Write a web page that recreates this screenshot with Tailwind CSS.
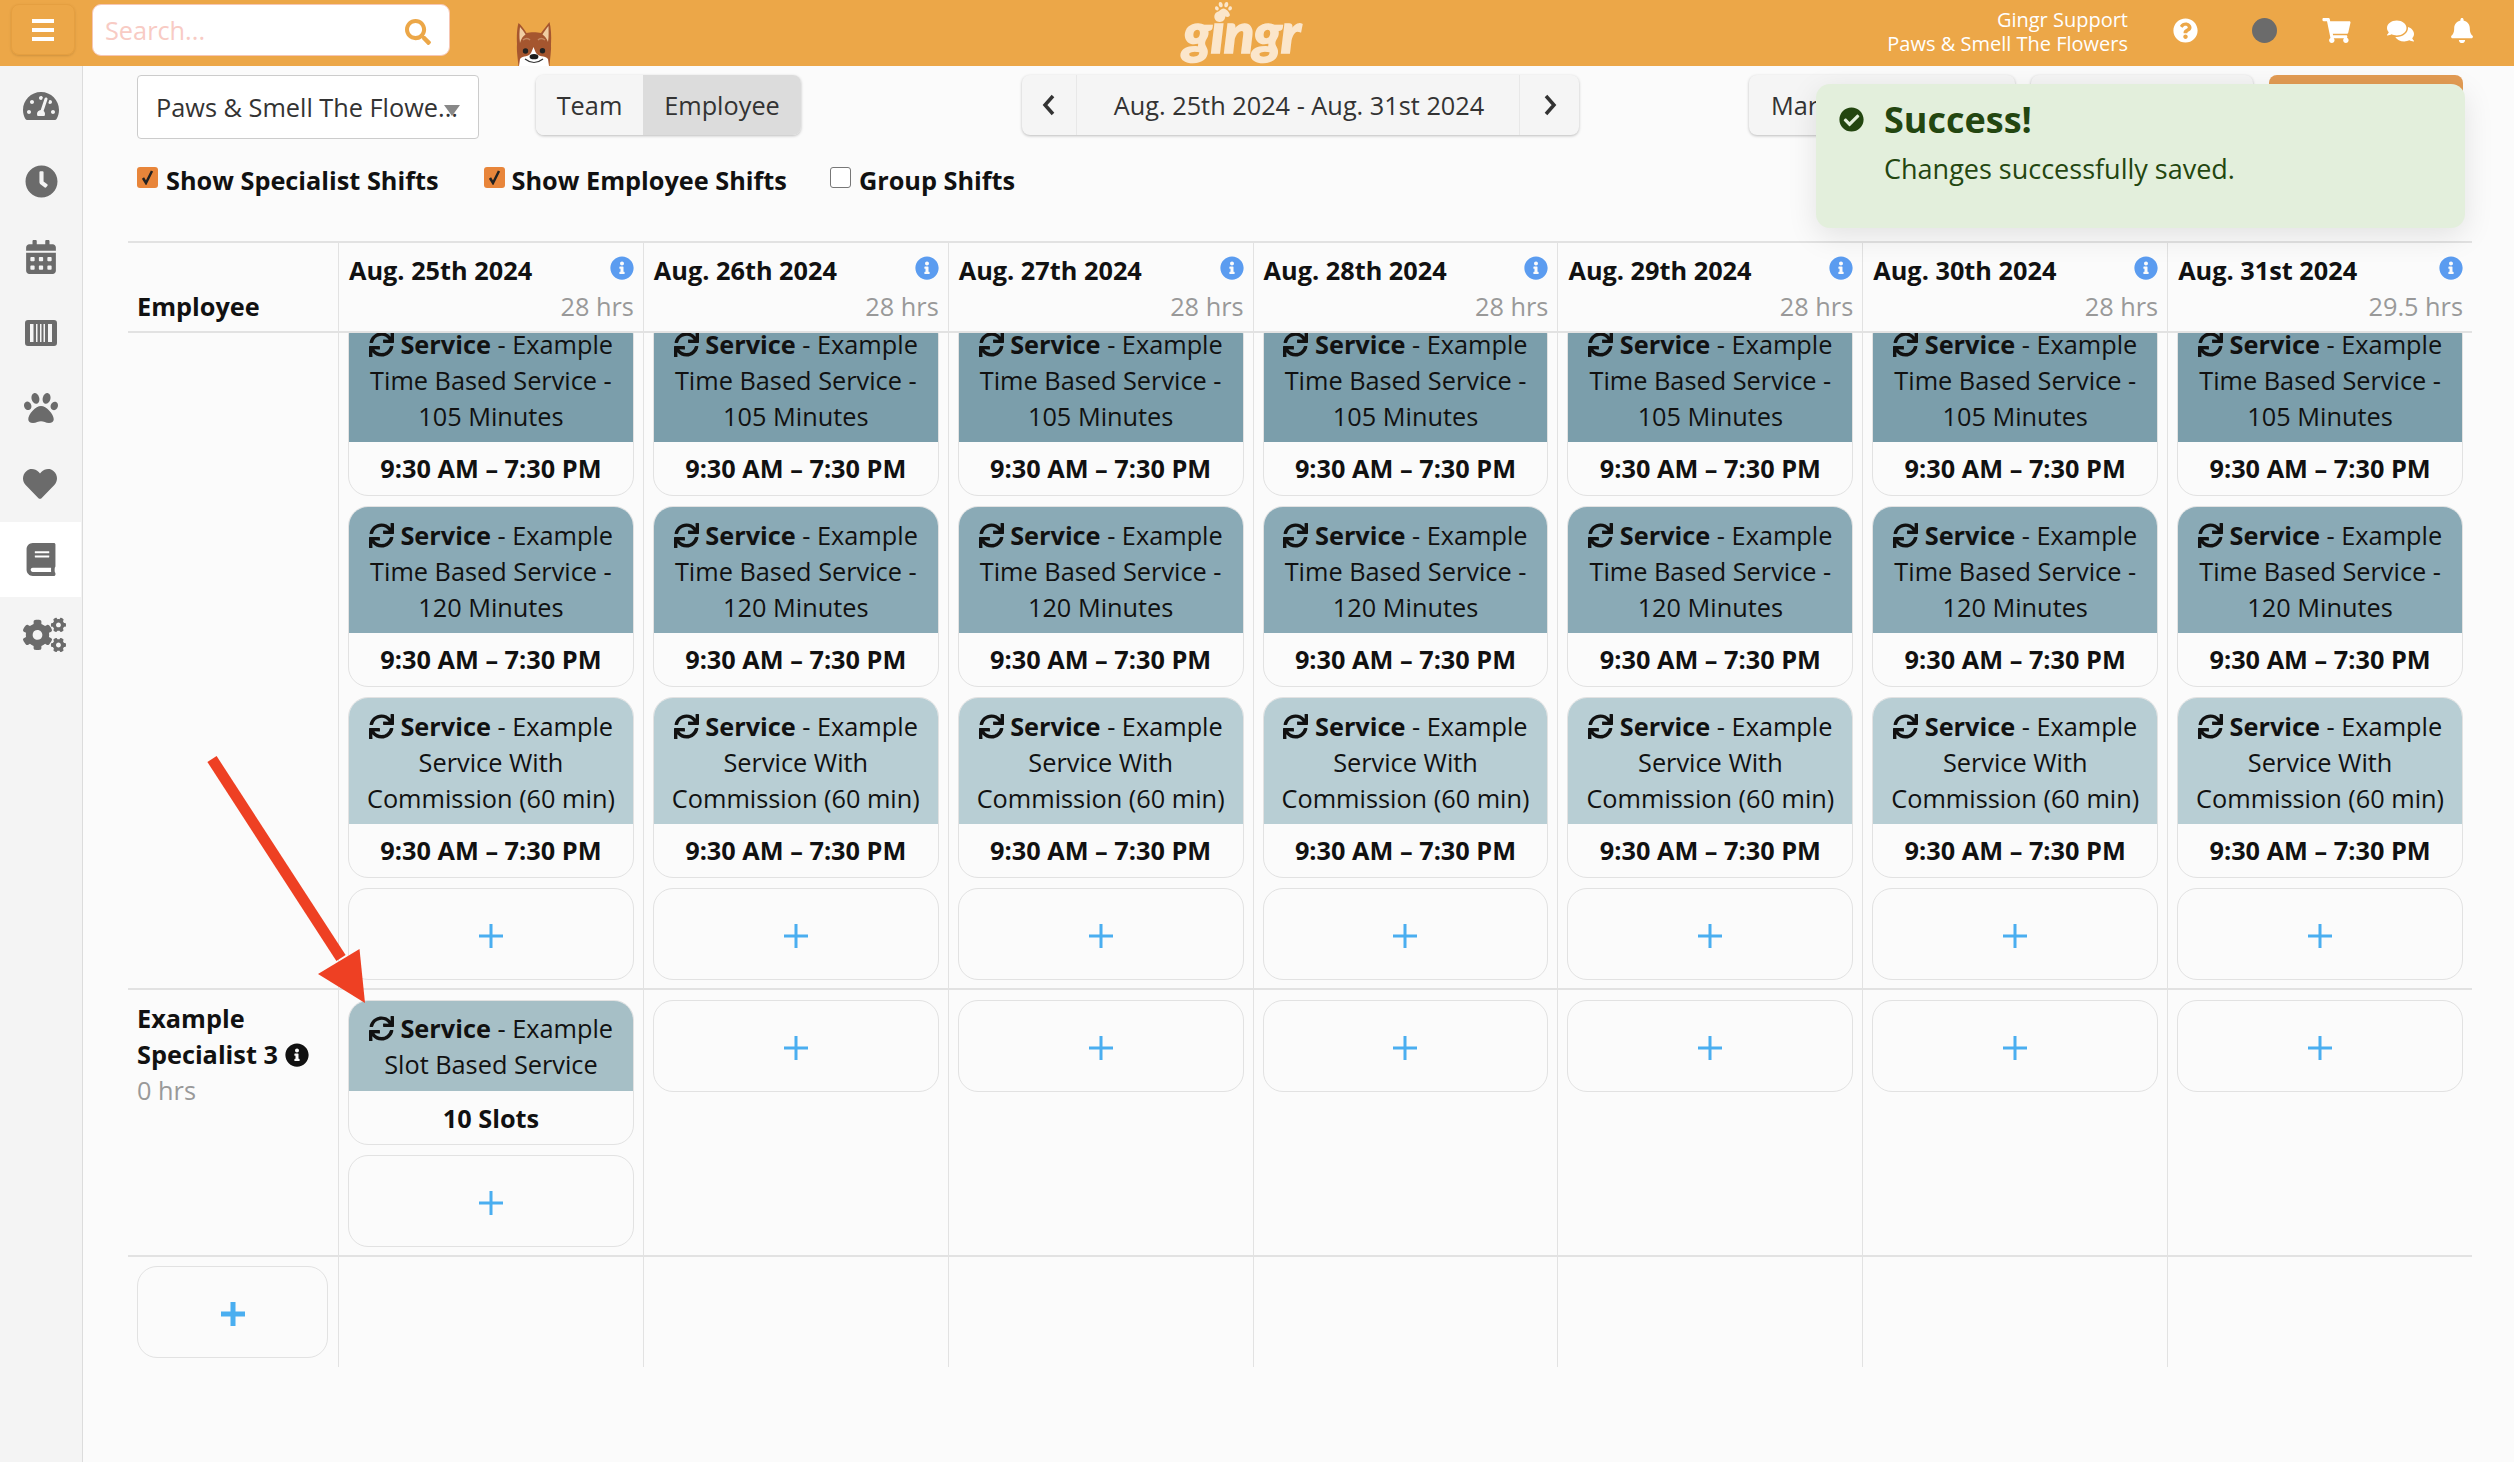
<!DOCTYPE html>
<html lang="en"><head><meta charset="utf-8"><title>Gingr</title>
<script src="https://cdn.jsdelivr.net/npm/@tailwindcss/browser@4"></script></head>
<body class="bg-[#fbfbfb] text-[#111] font-['Open_Sans',sans-serif] text-[25.3px] leading-[36px] relative">
<svg class="hidden"><defs>
<symbol id="s" viewBox="0 0 512 512"><path fill="currentColor" d="M440.65 12.57l4 82.77A247.16 247.16 0 0 0 255.83 8C134.73 8 33.91 94.92 12.29 209.82A12 12 0 0 0 24.09 224h49.05a12 12 0 0 0 11.67-9.26 175.91 175.91 0 0 1 317-56.94l-101.46-4.86a12 12 0 0 0-12.57 12v47.41a12 12 0 0 0 12 12H500a12 12 0 0 0 12-12V12a12 12 0 0 0-12-12h-47.37a12 12 0 0 0-11.98 12.57zM255.83 432a175.61 175.61 0 0 1-146-77.8l101.8 4.87a12 12 0 0 0 12.57-12v-47.4a12 12 0 0 0-12-12H12a12 12 0 0 0-12 12V500a12 12 0 0 0 12 12h47.35a12 12 0 0 0 12-12.6l-4.15-82.57A247.17 247.17 0 0 0 255.83 504c121.11 0 221.93-86.92 243.55-201.82a12 12 0 0 0-11.8-14.18h-49.05a12 12 0 0 0-11.67 9.26A175.86 175.86 0 0 1 255.83 432z"/></symbol>
<symbol id="i" viewBox="0 0 512 512"><path fill="currentColor" d="M256 8C119.043 8 8 119.083 8 256c0 136.997 111.043 248 248 248s248-111.003 248-248C504 119.083 392.957 8 256 8zm0 110c23.196 0 42 18.804 42 42s-18.804 42-42 42-42-18.804-42-42 18.804-42 42-42zm56 254c0 6.627-5.373 12-12 12h-88c-6.627 0-12-5.373-12-12v-24c0-6.627 5.373-12 12-12h12v-64h-12c-6.627 0-12-5.373-12-12v-24c0-6.627 5.373-12 12-12h64c6.627 0 12 5.373 12 12v100h12c6.627 0 12 5.373 12 12v24z"/></symbol>
<symbol id="p" viewBox="0 0 24 24"><path d="M12 0v24M0 12h24" stroke="currentColor" stroke-width="3" fill="none"/></symbol>
</defs></svg>

<header class="h-[66px] bg-[#eca748] flex items-start relative">
  <button class="ml-[11px] mt-[4px] w-[64px] h-[51px] rounded-[8px] border border-[#e59f40] shadow-sm flex flex-col items-center justify-center gap-[5px]"><span class="w-[22px] h-[4px] bg-white"></span><span class="w-[22px] h-[4px] bg-white"></span><span class="w-[22px] h-[4px] bg-white"></span></button>
  <div class="ml-[17px] mt-[4px] w-[358px] h-[52px] bg-white rounded-[9px] border border-[#f6c6b4] flex items-center justify-between pl-[12px] pr-[18px]"><span class="text-[#f8cbc4]">Search...</span>
    <svg class="w-[26px] h-[26px] text-[#eca748] mt-[3px]" viewBox="0 0 512 512"><path fill="currentColor" d="M505 442.7L405.3 343c-4.5-4.5-10.6-7-17-7H372c27.6-35.3 44-79.7 44-128C416 93.1 322.9 0 208 0S0 93.1 0 208s93.1 208 208 208c48.3 0 92.7-16.4 128-44v16.3c0 6.4 2.5 12.5 7 17l99.7 99.7c9.4 9.4 24.6 9.4 33.9 0l28.3-28.3c9.4-9.4 9.4-24.6.1-34zM208 336c-70.7 0-128-57.2-128-128 0-70.7 57.2-128 128-128 70.7 0 128 57.2 128 128 0 70.7-57.2 128-128 128z"/></svg></div>
  <svg class="ml-[65px] mt-[22px] w-[38px] h-[44px]" viewBox="0 0 38 44"><path d="M3.500 44 C2.500 34 1.500 28 2 22 C1.500 14 2 6 3.500 1 C6 3 9 7 11.500 11 C15 10 22 10 26 11 C29 7 32 3 34.500 0 C36 6 36.500 14 36 22 C36.500 28 35 36 34.500 44Z" fill="#a5562f"/><path d="M5 21 C4 14 4.500 9 5 5 C7 7 9 10 10.500 12.500 C8 14 6 17 5 21Z" fill="#f0cda2"/><path d="M33 20 C34 14 33.500 8 33.500 4 C31 7 29 10 27.500 12.500 C30 14 32 17 33 20Z" fill="#f0cda2"/><path d="M4 44 L5 37 C8 33 14 36 16.500 30 L18.500 25 L20.500 30 C23 36 30 33 33 37 L34 44Z" fill="#fff"/><path d="M8 18 Q12 15 15 18 M23 18 Q26 15 30 18" stroke="#c58a63" stroke-width="1.500" fill="none"/><circle cx="10.500" cy="29" r="2.700" fill="#222"/><circle cx="27.500" cy="28.700" r="2.700" fill="#222"/><ellipse cx="19" cy="34.700" rx="4.400" ry="2.600" fill="#1c1c1c"/><path d="M10 37 Q19 44 28 37" stroke="#333" stroke-width="1.200" fill="none"/></svg>
  <div class="ml-[630px] w-[118px] h-[66px] relative text-[#fbe6cb]">
    <svg class="absolute left-[32px] top-[1px] w-[17px] h-[17px]" viewBox="0 0 512 512"><path fill="currentColor" d="M256 224c-79.41 0-192 122.76-192 200.25 0 34.9 26.81 55.75 71.74 55.75 48.84 0 81.09-25.08 120.26-25.08 39.51 0 71.85 25.08 120.26 25.08 44.93 0 71.74-20.85 71.74-55.75C448 346.76 335.41 224 256 224zm-147.28-12.61c-10.4-34.65-42.44-57.09-71.56-50.13-29.12 6.96-44.29 40.69-33.89 75.34 10.4 34.65 42.44 57.09 71.56 50.13 29.12-6.96 44.29-40.69 33.89-75.34zm84.72-20.78c30.94-8.14 46.42-49.94 34.58-93.36s-46.52-72.01-77.46-63.87-46.42 49.94-34.58 93.36c11.84 43.42 46.52 72.02 77.46 63.87zm281.39-29.34c-29.12-6.96-61.15 15.48-71.56 50.13-10.4 34.65 4.77 68.38 33.89 75.34 29.12 6.96 61.15-15.48 71.56-50.13 10.4-34.65-4.77-68.38-33.89-75.34zm-156.27 29.34c30.94 8.14 65.62-20.45 77.46-63.87 11.84-43.42-3.64-85.21-34.58-93.36s-65.62 20.45-77.46 63.87c-11.84 43.42 3.64 85.22 34.58 93.36z"/></svg>
    <span class="absolute left-0 top-[2px] font-['Lato'] italic font-black text-[56px] leading-[60px] tracking-[-1px] [-webkit-text-stroke:1.500px_#fbe6cb]">gingr</span>
  </div>
  <div class="ml-auto mt-[8px] text-white text-right text-[20px] leading-[24px]"><div>Gingr Support</div><div>Paws &amp; Smell The Flowers</div></div>
  <svg class="ml-[45px] mt-[18px] w-[25px] h-[25px] text-white" viewBox="0 0 512 512"><path fill="currentColor" d="M504 256c0 136.997-111.043 248-248 248S8 392.997 8 256C8 119.083 119.043 8 256 8s248 111.083 248 248zM262.655 90c-54.497 0-89.255 22.957-116.549 63.758-3.536 5.286-2.353 12.415 2.715 16.258l34.699 26.31c5.205 3.947 12.621 3.008 16.665-2.122 17.864-22.658 30.113-35.797 57.303-35.797 20.429 0 45.698 13.148 45.698 32.958 0 14.976-12.363 22.667-32.534 33.976C247.128 238.528 216 254.941 216 296v4c0 6.627 5.373 12 12 12h56c6.627 0 12-5.373 12-12v-1.333c0-28.462 83.186-29.647 83.186-106.667 0-58.002-60.165-102-116.531-102zM256 338c-25.365 0-46 20.635-46 46 0 25.364 20.635 46 46 46s46-20.636 46-46c0-25.365-20.635-46-46-46z"/></svg>
  <span class="ml-[54px] mt-[18px] w-[25px] h-[25px] rounded-full bg-[#6b6b6b]"></span>
  <svg class="ml-[45px] mt-[18px] w-[29px] h-[25px] text-white" viewBox="0 0 576 512"><path fill="currentColor" d="M528.12 301.319l47.273-208C578.806 78.301 567.391 64 551.99 64H159.208l-9.166-44.81C147.758 8.021 137.93 0 126.529 0H24C10.745 0 0 10.745 0 24v16c0 13.255 10.745 24 24 24h69.883l70.248 343.435C147.325 417.1 136 435.222 136 456c0 30.928 25.072 56 56 56s56-25.072 56-56c0-15.674-6.447-29.835-16.824-40h209.647C430.447 426.165 424 440.326 424 456c0 30.928 25.072 56 56 56s56-25.072 56-56c0-22.172-12.888-41.332-31.579-50.405l5.517-24.276c3.413-15.018-8.002-29.319-23.403-29.319H218.117l-6.545-32h293.145c11.206 0 20.92-7.754 23.403-18.681z"/></svg>
  <svg class="ml-[35px] mt-[19px] w-[29px] h-[24px] text-white" viewBox="0 0 576 512"><path fill="currentColor" d="M416 192c0-88.4-93.1-160-208-160S0 103.6 0 192c0 34.3 14.1 65.9 38 92-13.4 30.2-35.5 54.2-35.8 54.5-2.2 2.3-2.8 5.7-1.5 8.7S4.8 352 8 352c36.6 0 66.9-12.3 88.7-25 32.2 15.7 70.3 25 111.3 25 114.9 0 208-71.6 208-160zm122 220c23.9-26 38-57.7 38-92 0-66.9-53.5-124.2-129.3-148.1.9 6.6 1.3 13.3 1.3 20.1 0 105.9-107.7 192-240 192-10.8 0-21.3-.8-31.7-1.9C207.8 439.6 281.8 480 368 480c41 0 79.1-9.2 111.3-25 21.8 12.7 52.1 25 88.7 25 3.2 0 6.1-1.9 7.3-4.8 1.3-2.9.7-6.3-1.5-8.7-.3-.3-22.4-24.2-35.8-54.5z"/></svg>
  <svg class="ml-[36px] mr-[41px] mt-[18px] w-[22px] h-[25px] text-white" viewBox="0 0 448 512"><path fill="currentColor" d="M224 512c35.32 0 63.97-28.65 63.97-64H160.03c0 35.35 28.65 64 63.97 64zm215.39-149.71c-19.32-20.76-55.47-51.99-55.47-154.29 0-77.7-54.48-139.9-127.94-155.16V32c0-17.67-14.32-32-31.98-32s-31.98 14.33-31.98 32v20.84C118.56 68.1 64.08 130.3 64.08 208c0 102.3-36.15 133.53-55.47 154.29-6 6.45-8.66 14.16-8.61 21.71.11 16.4 12.98 32 32.1 32h383.8c19.12 0 32-15.6 32.1-32 .05-7.55-2.61-15.27-8.61-21.71z"/></svg>
</header>

<div class="flex h-[1396px] overflow-hidden relative">
<aside class="w-[83px] shrink-0 bg-[#f4f4f4] border-r border-[#dcdcdc] text-[#6b6b6b] pt-[2px]">
  <div class="h-[75.6px] flex items-center justify-center"><svg class="w-[38px] h-[32px]" viewBox="0 0 576 512"><path fill="currentColor" d="M288 32C128.94 32 0 160.94 0 320c0 52.8 14.25 102.26 39.06 144.8 5.61 9.62 16.3 15.2 27.44 15.2h443c11.14 0 21.83-5.58 27.44-15.2C561.75 422.26 576 372.8 576 320c0-159.06-128.94-288-288-288zm0 64c14.71 0 26.58 10.13 30.32 23.65-1.11 2.26-2.64 4.23-3.45 6.67l-9.22 27.67c-5.13 3.49-10.97 6.01-17.64 6.01-17.67 0-32-14.33-32-32S270.33 96 288 96zM96 384c-17.67 0-32-14.33-32-32s14.33-32 32-32 32 14.33 32 32-14.33 32-32 32zm48-160c-17.67 0-32-14.33-32-32s14.33-32 32-32 32 14.33 32 32-14.33 32-32 32zm246.77-72.41l-61.33 184C343.13 347.33 352 364.54 352 384c0 11.72-3.38 22.55-8.88 32H232.88c-5.5-9.45-8.88-20.28-8.88-32 0-33.94 26.5-61.43 59.9-63.59l61.34-184.01c4.17-12.56 17.73-19.45 30.36-15.17 12.57 4.19 19.35 17.79 15.17 30.36zm14.66 57.2l15.52-46.55c3.47-1.29 7.13-2.23 11.05-2.23 17.67 0 32 14.33 32 32s-14.33 32-32 32c-11.38-.01-20.89-6.28-26.57-15.22zM480 384c-17.67 0-32-14.33-32-32s14.33-32 32-32 32 14.33 32 32-14.33 32-32 32z"/></svg></div>
  <div class="h-[75.6px] flex items-center justify-center"><svg class="w-[33px] h-[33px]" viewBox="0 0 512 512"><path fill="currentColor" d="M256,8C119,8,8,119,8,256S119,504,256,504,504,393,504,256,393,8,256,8Zm92.49,313h0l-20,25a16,16,0,0,1-22.49,2.5h0l-67-49.72a40,40,0,0,1-15-31.23V112a16,16,0,0,1,16-16h32a16,16,0,0,1,16,16V256l58,42.5A16,16,0,0,1,348.49,321Z"/></svg></div>
  <div class="h-[75.6px] flex items-center justify-center"><svg class="w-[30px] h-[34px]" viewBox="0 0 448 512"><path fill="currentColor" d="M0 464c0 26.5 21.5 48 48 48h352c26.5 0 48-21.5 48-48V192H0v272zm320-196c0-6.6 5.4-12 12-12h40c6.6 0 12 5.4 12 12v40c0 6.6-5.4 12-12 12h-40c-6.6 0-12-5.4-12-12v-40zm0 128c0-6.6 5.4-12 12-12h40c6.6 0 12 5.4 12 12v40c0 6.6-5.4 12-12 12h-40c-6.6 0-12-5.4-12-12v-40zM192 268c0-6.6 5.4-12 12-12h40c6.6 0 12 5.4 12 12v40c0 6.6-5.4 12-12 12h-40c-6.6 0-12-5.4-12-12v-40zm0 128c0-6.6 5.4-12 12-12h40c6.6 0 12 5.4 12 12v40c0 6.6-5.4 12-12 12h-40c-6.6 0-12-5.4-12-12v-40zM64 268c0-6.6 5.4-12 12-12h40c6.6 0 12 5.4 12 12v40c0 6.6-5.4 12-12 12H76c-6.6 0-12-5.4-12-12v-40zm0 128c0-6.6 5.4-12 12-12h40c6.6 0 12 5.4 12 12v40c0 6.6-5.4 12-12 12H76c-6.6 0-12-5.4-12-12v-40zM400 64h-48V16c0-8.8-7.2-16-16-16h-32c-8.8 0-16 7.2-16 16v48H160V16c0-8.8-7.2-16-16-16h-32c-8.8 0-16 7.2-16 16v48H48C21.5 64 0 85.5 0 112v48h448v-48c0-26.5-21.5-48-48-48z"/></svg></div>
  <div class="h-[75.6px] flex items-center justify-center"><svg class="w-[32px] h-[26px]" viewBox="0 0 32 26"><path fill="currentColor" fill-rule="evenodd" d="M3 0h26a3 3 0 0 1 3 3v20a3 3 0 0 1-3 3H3a3 3 0 0 1-3-3V3a3 3 0 0 1 3-3zM5 4v18h3.500V4zM11 4v18h1.500V4zM15 4v18h1.500V4zM18.500 4v18h1.500V4zM23 4v18h4V4z"/></svg></div>
  <div class="h-[75.6px] flex items-center justify-center"><svg class="w-[34px] h-[34px]" viewBox="0 0 512 512"><path fill="currentColor" d="M256 224c-79.41 0-192 122.76-192 200.25 0 34.9 26.81 55.75 71.74 55.75 48.84 0 81.09-25.08 120.26-25.08 39.51 0 71.85 25.08 120.26 25.08 44.93 0 71.74-20.85 71.74-55.75C448 346.76 335.41 224 256 224zm-147.28-12.61c-10.4-34.65-42.44-57.09-71.56-50.13-29.12 6.96-44.29 40.69-33.89 75.34 10.4 34.65 42.44 57.09 71.56 50.13 29.12-6.96 44.29-40.69 33.89-75.34zm84.72-20.78c30.94-8.14 46.42-49.94 34.58-93.36s-46.52-72.01-77.46-63.87-46.42 49.94-34.58 93.36c11.84 43.42 46.52 72.02 77.46 63.87zm281.39-29.34c-29.12-6.96-61.15 15.48-71.56 50.13-10.4 34.65 4.77 68.38 33.89 75.34 29.12 6.96 61.15-15.48 71.56-50.13 10.4-34.65-4.77-68.38-33.89-75.34zm-156.27 29.34c30.94 8.14 65.62-20.45 77.46-63.87 11.84-43.42-3.64-85.21-34.58-93.36s-65.62 20.45-77.46 63.87c-11.84 43.42 3.64 85.22 34.58 93.36z"/></svg></div>
  <div class="h-[75.6px] flex items-center justify-center"><svg class="w-[34px] h-[34px] -ml-[2px]" viewBox="0 0 512 512"><path fill="currentColor" d="M462.3 62.6C407.5 15.9 326 24.3 275.7 76.2L256 96.5l-19.7-20.3C186.1 24.3 104.5 15.9 49.7 62.6c-62.8 53.6-66.1 149.8-9.9 207.9l193.5 199.8c12.5 12.9 32.8 12.9 45.3 0l193.5-199.8c56.3-58.1 53-154.3-9.8-207.9z"/></svg></div>
  <div class="h-[75.6px] w-[81px] bg-white flex items-center justify-center"><svg class="w-[30px] h-[33px]" viewBox="0 0 448 512"><path fill="currentColor" d="M448 360V24c0-13.3-10.7-24-24-24H96C43 0 0 43 0 96v320c0 53 43 96 96 96h328c13.3 0 24-10.7 24-24v-16c0-7.5-3.500-14.300-8.900-18.700-4.200-15.400-4.200-59.300 0-74.700 5.400-4.300 8.900-11.100 8.900-18.600zM128 134c0-3.300 2.700-6 6-6h212c3.300 0 6 2.700 6 6v20c0 3.300-2.700 6-6 6H134c-3.300 0-6-2.700-6-6v-20zm0 64c0-3.300 2.700-6 6-6h212c3.300 0 6 2.700 6 6v20c0 3.300-2.700 6-6 6H134c-3.300 0-6-2.700-6-6v-20zm253.400 250H96c-17.700 0-32-14.300-32-32 0-17.600 14.400-32 32-32h285.400c-1.900 17.100-1.900 46.900 0 64z"/></svg></div>
  <div class="h-[75.6px] flex items-center justify-center"><svg class="w-[43px] h-[38px] ml-[6px]" viewBox="0 0 640 512"><path fill="currentColor" d="M512.1 191l-8.2 14.3c-3 5.3-9.4 7.5-15.1 5.4-11.8-4.4-22.6-10.7-32.1-18.6-4.6-3.8-5.8-10.5-2.8-15.7l8.2-14.3c-6.9-8-12.3-17.3-15.9-27.4h-16.5c-6 0-11.2-4.3-12.2-10.3-2-12-2.1-24.6 0-37.1 1-6 6.2-10.4 12.2-10.4h16.5c3.6-10.1 9-19.4 15.9-27.4l-8.2-14.3c-3-5.2-1.9-11.9 2.8-15.7 9.5-7.9 20.4-14.2 32.1-18.6 5.7-2.1 12.1.1 15.1 5.4l8.2 14.3c10.5-1.9 21.2-1.9 31.7 0L552 6.3c3-5.3 9.4-7.5 15.1-5.4 11.8 4.4 22.6 10.7 32.1 18.6 4.6 3.8 5.8 10.5 2.8 15.7l-8.2 14.3c6.9 8 12.3 17.3 15.9 27.4h16.5c6 0 11.2 4.3 12.2 10.3 2 12 2.1 24.6 0 37.1-1 6-6.2 10.4-12.2 10.4h-16.5c-3.6 10.1-9 19.4-15.9 27.4l8.2 14.3c3 5.2 1.9 11.9-2.8 15.7-9.5 7.9-20.4 14.2-32.1 18.6-5.7 2.1-12.1-.1-15.1-5.4l-8.2-14.3c-10.4 1.9-21.2 1.9-31.7 0zm-10.5-58.8c38.5 29.6 82.4-14.3 52.8-52.8-38.5-29.7-82.4 14.3-52.8 52.8zM386.3 286.1l33.7 16.8c10.1 5.8 14.5 18.1 10.5 29.1-8.9 24.2-26.4 46.4-42.6 65.8-7.4 8.9-20.2 11.1-30.3 5.3l-29.1-16.8c-16 13.7-34.6 24.6-54.9 31.7v33.6c0 11.6-8.3 21.6-19.7 23.6-24.6 4.2-50.4 4.4-75.9 0-11.5-2-20-11.9-20-23.6V418c-20.3-7.2-38.9-18-54.9-31.7L74 403c-10 5.8-22.9 3.6-30.3-5.3-16.2-19.4-33.3-41.6-42.2-65.7-4-10.9.4-23.2 10.5-29.1l33.3-16.8c-3.9-20.9-3.9-42.4 0-63.4L12 205.8c-10.1-5.8-14.6-18.1-10.5-29 8.9-24.2 26-46.4 42.2-65.8 7.4-8.9 20.2-11.1 30.3-5.3l29.1 16.8c16-13.7 34.6-24.6 54.9-31.7V57.1c0-11.5 8.2-21.5 19.6-23.5 24.6-4.2 50.5-4.4 76-.1 11.5 2 20 11.9 20 23.6v33.6c20.3 7.2 38.9 18 54.9 31.7l29.1-16.8c10-5.8 22.9-3.6 30.3 5.3 16.2 19.4 33.2 41.6 42.1 65.8 4 10.9.1 23.2-10 29.1l-33.7 16.8c3.9 21 3.9 42.5 0 63.5zm-117.6 21.1c59.2-77-28.7-164.9-105.7-105.7-59.2 77 28.7 164.9 105.7 105.7zm243.4 182.7l-8.2 14.3c-3 5.3-9.4 7.5-15.1 5.4-11.8-4.4-22.6-10.7-32.1-18.6-4.6-3.8-5.8-10.5-2.8-15.7l8.2-14.3c-6.9-8-12.3-17.3-15.9-27.4h-16.5c-6 0-11.2-4.3-12.2-10.3-2-12-2.1-24.6 0-37.1 1-6 6.2-10.4 12.2-10.4h16.5c3.6-10.1 9-19.4 15.9-27.4l-8.2-14.3c-3-5.2-1.9-11.9 2.8-15.7 9.5-7.9 20.4-14.2 32.1-18.6 5.7-2.1 12.1.1 15.1 5.4l8.2 14.3c10.5-1.9 21.2-1.9 31.7 0l8.2-14.3c3-5.3 9.4-7.5 15.1-5.4 11.8 4.4 22.6 10.7 32.1 18.6 4.6 3.8 5.8 10.5 2.8 15.7l-8.2 14.3c6.9 8 12.3 17.3 15.9 27.4h16.5c6 0 11.2 4.3 12.2 10.3 2 12 2.1 24.6 0 37.1-1 6-6.2 10.4-12.2 10.4h-16.5c-3.6 10.1-9 19.4-15.9 27.4l8.2 14.3c3 5.2 1.9 11.9-2.8 15.7-9.5 7.9-20.4 14.2-32.1 18.6-5.7 2.1-12.1-.1-15.1-5.4l-8.2-14.3c-10.4 1.9-21.2 1.9-31.7 0zM501.6 431c38.5 29.6 82.4-14.3 52.8-52.8-38.5-29.6-82.4 14.3-52.8 52.8z"/></svg></div>
</aside>

<main class="flex-1 min-w-0 pl-[45px] pr-[42px] pt-[9px] text-[#333]">
  <div class="flex items-start pl-[9px]">
    <div class="w-[342px] h-[64px] shrink-0 bg-white border border-[#ccc] rounded-[4px] flex items-center pl-[18px] relative"><span class="whitespace-nowrap">Paws &amp; Smell The Flowe...</span><span class="absolute right-[18px] top-[29px] w-0 h-0 border-l-[8px] border-r-[8px] border-t-[11px] border-l-transparent border-r-transparent border-t-[#888]"></span></div>
    <div class="ml-[57px] w-[265px] h-[60px] shrink-0 flex rounded-[8px] shadow-[0_1px_3px_rgba(0,0,0,0.25)] overflow-hidden"><span class="w-[107px] bg-[#f5f5f5] flex items-center justify-center">Team</span><span class="flex-1 bg-[#dcdcdc] flex items-center justify-center">Employee</span></div>
    <div class="ml-[221px] w-[557px] h-[60px] shrink-0 flex rounded-[8px] bg-[#f5f5f5] shadow-[0_1px_3px_rgba(0,0,0,0.25)]"><span class="w-[55px] border-r border-[#e8e8e8] flex items-center justify-center"><svg class="w-[14px] h-[22px]" viewBox="0 0 14 22"><path d="M11 2 3 11l8 9" stroke="#333" stroke-width="3.500" fill="none"/></svg></span><span class="flex-1 flex items-center justify-center pl-[2px]">Aug. 25th 2024 - Aug. 31st 2024</span><span class="w-[60px] border-l border-[#e8e8e8] flex items-center justify-center"><svg class="w-[14px] h-[22px]" viewBox="0 0 14 22"><path d="M3 2l8 9-8 9" stroke="#333" stroke-width="3.500" fill="none"/></svg></span></div>
    <div class="ml-[170px] w-[266px] h-[60px] shrink-0 rounded-[8px] bg-[#f5f5f5] shadow-[0_1px_3px_rgba(0,0,0,0.25)] flex items-center pl-[22px]">Mar</div>
    <div class="ml-[16px] w-[222px] h-[60px] shrink-0 rounded-[8px] bg-[#f5f5f5] shadow-[0_1px_3px_rgba(0,0,0,0.25)]"></div>
    <div class="ml-[16px] w-[194px] h-[60px] shrink-0 rounded-[8px] bg-[#e29b53]"></div>
  </div>
  <div class="flex items-center pl-[9px] mt-[24px] h-[34px] font-bold text-[#111]">
    <span class="w-[21px] h-[21px] rounded-[3px] bg-[#e8853a] text-[#222] flex items-center justify-center -mt-[6px]"><svg class="w-[13px] h-[16px]" viewBox="0 0 13 16"><path d="M2 9l3 5 6-12" stroke="currentColor" stroke-width="2.500" fill="none"/></svg></span><span class="ml-[8px]">Show Specialist Shifts</span>
    <span class="ml-[45px] w-[21px] h-[21px] rounded-[3px] bg-[#e8853a] text-[#222] flex items-center justify-center -mt-[6px]"><svg class="w-[13px] h-[16px]" viewBox="0 0 13 16"><path d="M2 9l3 5 6-12" stroke="currentColor" stroke-width="2.500" fill="none"/></svg></span><span class="ml-[7px]">Show Employee Shifts</span>
    <span class="ml-[43px] w-[21px] h-[21px] rounded-[3px] bg-white border border-[#777] -mt-[6px]"></span><span class="ml-[8px]">Group Shifts</span>
  </div>

  <div class="mt-[44px] text-[#111]">
    <div class="grid grid-cols-[210px_repeat(7,minmax(0,1fr))] border-t-2 border-b-2 border-[#e2e2e2] h-[92px]">
      <div class="flex items-end pl-[9px] pb-[7px] font-bold">Employee</div>
      <div class="border-l border-[#e2e2e2] pl-[10px] pr-[9px] pt-[9px]"><div class="flex justify-between font-bold"><span>Aug. 25th 2024</span><svg class="w-[24px] h-[24px] mt-[4px] text-[#5b9cf0]"><use href="#i"/></svg></div><div class="text-right text-[#999]">28 hrs</div></div>
      <div class="border-l border-[#e2e2e2] pl-[10px] pr-[9px] pt-[9px]"><div class="flex justify-between font-bold"><span>Aug. 26th 2024</span><svg class="w-[24px] h-[24px] mt-[4px] text-[#5b9cf0]"><use href="#i"/></svg></div><div class="text-right text-[#999]">28 hrs</div></div>
      <div class="border-l border-[#e2e2e2] pl-[10px] pr-[9px] pt-[9px]"><div class="flex justify-between font-bold"><span>Aug. 27th 2024</span><svg class="w-[24px] h-[24px] mt-[4px] text-[#5b9cf0]"><use href="#i"/></svg></div><div class="text-right text-[#999]">28 hrs</div></div>
      <div class="border-l border-[#e2e2e2] pl-[10px] pr-[9px] pt-[9px]"><div class="flex justify-between font-bold"><span>Aug. 28th 2024</span><svg class="w-[24px] h-[24px] mt-[4px] text-[#5b9cf0]"><use href="#i"/></svg></div><div class="text-right text-[#999]">28 hrs</div></div>
      <div class="border-l border-[#e2e2e2] pl-[10px] pr-[9px] pt-[9px]"><div class="flex justify-between font-bold"><span>Aug. 29th 2024</span><svg class="w-[24px] h-[24px] mt-[4px] text-[#5b9cf0]"><use href="#i"/></svg></div><div class="text-right text-[#999]">28 hrs</div></div>
      <div class="border-l border-[#e2e2e2] pl-[10px] pr-[9px] pt-[9px]"><div class="flex justify-between font-bold"><span>Aug. 30th 2024</span><svg class="w-[24px] h-[24px] mt-[4px] text-[#5b9cf0]"><use href="#i"/></svg></div><div class="text-right text-[#999]">28 hrs</div></div>
      <div class="border-l border-[#e2e2e2] pl-[10px] pr-[9px] pt-[9px]"><div class="flex justify-between font-bold"><span>Aug. 31st 2024</span><svg class="w-[24px] h-[24px] mt-[4px] text-[#5b9cf0]"><use href="#i"/></svg></div><div class="text-right text-[#999]">29.5 hrs</div></div>
    </div>
    <div class="grid grid-cols-[210px_repeat(7,minmax(0,1fr))] border-b-2 border-[#e2e2e2] h-[657px] overflow-hidden text-center">
      <div></div>
      <div class="border-l border-[#e2e2e2] px-[9px] flex flex-col gap-[10px] -mt-[18.5px]"><div class="rounded-[20px] border border-[#e2e2e2] overflow-hidden"><div class="bg-[#7b9eab] h-[126px] pt-[10px]"><svg class="inline w-[25px] h-[25px] align-[-3px]"><use href="#s"/></svg> <b>Service</b> - Example<br>Time Based Service -<br>105 Minutes</div><div class="h-[53px] flex items-center justify-center font-bold">9:30 AM – 7:30 PM</div></div><div class="rounded-[20px] border border-[#e2e2e2] overflow-hidden"><div class="bg-[#8aaab6] h-[126px] pt-[10px]"><svg class="inline w-[25px] h-[25px] align-[-3px]"><use href="#s"/></svg> <b>Service</b> - Example<br>Time Based Service -<br>120 Minutes</div><div class="h-[53px] flex items-center justify-center font-bold">9:30 AM – 7:30 PM</div></div><div class="rounded-[20px] border border-[#e2e2e2] overflow-hidden"><div class="bg-[#b8ced4] h-[126px] pt-[10px]"><svg class="inline w-[25px] h-[25px] align-[-3px]"><use href="#s"/></svg> <b>Service</b> - Example<br>Service With<br>Commission (60 min)</div><div class="h-[53px] flex items-center justify-center font-bold">9:30 AM – 7:30 PM</div></div><div class="rounded-[20px] border border-[#e2e2e2] h-[92px] flex items-center justify-center text-[#4aaef0]"><svg class="w-[24px] h-[24px] mt-[4px]"><use href="#p"/></svg></div></div>
      <div class="border-l border-[#e2e2e2] px-[9px] flex flex-col gap-[10px] -mt-[18.5px]"><div class="rounded-[20px] border border-[#e2e2e2] overflow-hidden"><div class="bg-[#7b9eab] h-[126px] pt-[10px]"><svg class="inline w-[25px] h-[25px] align-[-3px]"><use href="#s"/></svg> <b>Service</b> - Example<br>Time Based Service -<br>105 Minutes</div><div class="h-[53px] flex items-center justify-center font-bold">9:30 AM – 7:30 PM</div></div><div class="rounded-[20px] border border-[#e2e2e2] overflow-hidden"><div class="bg-[#8aaab6] h-[126px] pt-[10px]"><svg class="inline w-[25px] h-[25px] align-[-3px]"><use href="#s"/></svg> <b>Service</b> - Example<br>Time Based Service -<br>120 Minutes</div><div class="h-[53px] flex items-center justify-center font-bold">9:30 AM – 7:30 PM</div></div><div class="rounded-[20px] border border-[#e2e2e2] overflow-hidden"><div class="bg-[#b8ced4] h-[126px] pt-[10px]"><svg class="inline w-[25px] h-[25px] align-[-3px]"><use href="#s"/></svg> <b>Service</b> - Example<br>Service With<br>Commission (60 min)</div><div class="h-[53px] flex items-center justify-center font-bold">9:30 AM – 7:30 PM</div></div><div class="rounded-[20px] border border-[#e2e2e2] h-[92px] flex items-center justify-center text-[#4aaef0]"><svg class="w-[24px] h-[24px] mt-[4px]"><use href="#p"/></svg></div></div>
      <div class="border-l border-[#e2e2e2] px-[9px] flex flex-col gap-[10px] -mt-[18.5px]"><div class="rounded-[20px] border border-[#e2e2e2] overflow-hidden"><div class="bg-[#7b9eab] h-[126px] pt-[10px]"><svg class="inline w-[25px] h-[25px] align-[-3px]"><use href="#s"/></svg> <b>Service</b> - Example<br>Time Based Service -<br>105 Minutes</div><div class="h-[53px] flex items-center justify-center font-bold">9:30 AM – 7:30 PM</div></div><div class="rounded-[20px] border border-[#e2e2e2] overflow-hidden"><div class="bg-[#8aaab6] h-[126px] pt-[10px]"><svg class="inline w-[25px] h-[25px] align-[-3px]"><use href="#s"/></svg> <b>Service</b> - Example<br>Time Based Service -<br>120 Minutes</div><div class="h-[53px] flex items-center justify-center font-bold">9:30 AM – 7:30 PM</div></div><div class="rounded-[20px] border border-[#e2e2e2] overflow-hidden"><div class="bg-[#b8ced4] h-[126px] pt-[10px]"><svg class="inline w-[25px] h-[25px] align-[-3px]"><use href="#s"/></svg> <b>Service</b> - Example<br>Service With<br>Commission (60 min)</div><div class="h-[53px] flex items-center justify-center font-bold">9:30 AM – 7:30 PM</div></div><div class="rounded-[20px] border border-[#e2e2e2] h-[92px] flex items-center justify-center text-[#4aaef0]"><svg class="w-[24px] h-[24px] mt-[4px]"><use href="#p"/></svg></div></div>
      <div class="border-l border-[#e2e2e2] px-[9px] flex flex-col gap-[10px] -mt-[18.5px]"><div class="rounded-[20px] border border-[#e2e2e2] overflow-hidden"><div class="bg-[#7b9eab] h-[126px] pt-[10px]"><svg class="inline w-[25px] h-[25px] align-[-3px]"><use href="#s"/></svg> <b>Service</b> - Example<br>Time Based Service -<br>105 Minutes</div><div class="h-[53px] flex items-center justify-center font-bold">9:30 AM – 7:30 PM</div></div><div class="rounded-[20px] border border-[#e2e2e2] overflow-hidden"><div class="bg-[#8aaab6] h-[126px] pt-[10px]"><svg class="inline w-[25px] h-[25px] align-[-3px]"><use href="#s"/></svg> <b>Service</b> - Example<br>Time Based Service -<br>120 Minutes</div><div class="h-[53px] flex items-center justify-center font-bold">9:30 AM – 7:30 PM</div></div><div class="rounded-[20px] border border-[#e2e2e2] overflow-hidden"><div class="bg-[#b8ced4] h-[126px] pt-[10px]"><svg class="inline w-[25px] h-[25px] align-[-3px]"><use href="#s"/></svg> <b>Service</b> - Example<br>Service With<br>Commission (60 min)</div><div class="h-[53px] flex items-center justify-center font-bold">9:30 AM – 7:30 PM</div></div><div class="rounded-[20px] border border-[#e2e2e2] h-[92px] flex items-center justify-center text-[#4aaef0]"><svg class="w-[24px] h-[24px] mt-[4px]"><use href="#p"/></svg></div></div>
      <div class="border-l border-[#e2e2e2] px-[9px] flex flex-col gap-[10px] -mt-[18.5px]"><div class="rounded-[20px] border border-[#e2e2e2] overflow-hidden"><div class="bg-[#7b9eab] h-[126px] pt-[10px]"><svg class="inline w-[25px] h-[25px] align-[-3px]"><use href="#s"/></svg> <b>Service</b> - Example<br>Time Based Service -<br>105 Minutes</div><div class="h-[53px] flex items-center justify-center font-bold">9:30 AM – 7:30 PM</div></div><div class="rounded-[20px] border border-[#e2e2e2] overflow-hidden"><div class="bg-[#8aaab6] h-[126px] pt-[10px]"><svg class="inline w-[25px] h-[25px] align-[-3px]"><use href="#s"/></svg> <b>Service</b> - Example<br>Time Based Service -<br>120 Minutes</div><div class="h-[53px] flex items-center justify-center font-bold">9:30 AM – 7:30 PM</div></div><div class="rounded-[20px] border border-[#e2e2e2] overflow-hidden"><div class="bg-[#b8ced4] h-[126px] pt-[10px]"><svg class="inline w-[25px] h-[25px] align-[-3px]"><use href="#s"/></svg> <b>Service</b> - Example<br>Service With<br>Commission (60 min)</div><div class="h-[53px] flex items-center justify-center font-bold">9:30 AM – 7:30 PM</div></div><div class="rounded-[20px] border border-[#e2e2e2] h-[92px] flex items-center justify-center text-[#4aaef0]"><svg class="w-[24px] h-[24px] mt-[4px]"><use href="#p"/></svg></div></div>
      <div class="border-l border-[#e2e2e2] px-[9px] flex flex-col gap-[10px] -mt-[18.5px]"><div class="rounded-[20px] border border-[#e2e2e2] overflow-hidden"><div class="bg-[#7b9eab] h-[126px] pt-[10px]"><svg class="inline w-[25px] h-[25px] align-[-3px]"><use href="#s"/></svg> <b>Service</b> - Example<br>Time Based Service -<br>105 Minutes</div><div class="h-[53px] flex items-center justify-center font-bold">9:30 AM – 7:30 PM</div></div><div class="rounded-[20px] border border-[#e2e2e2] overflow-hidden"><div class="bg-[#8aaab6] h-[126px] pt-[10px]"><svg class="inline w-[25px] h-[25px] align-[-3px]"><use href="#s"/></svg> <b>Service</b> - Example<br>Time Based Service -<br>120 Minutes</div><div class="h-[53px] flex items-center justify-center font-bold">9:30 AM – 7:30 PM</div></div><div class="rounded-[20px] border border-[#e2e2e2] overflow-hidden"><div class="bg-[#b8ced4] h-[126px] pt-[10px]"><svg class="inline w-[25px] h-[25px] align-[-3px]"><use href="#s"/></svg> <b>Service</b> - Example<br>Service With<br>Commission (60 min)</div><div class="h-[53px] flex items-center justify-center font-bold">9:30 AM – 7:30 PM</div></div><div class="rounded-[20px] border border-[#e2e2e2] h-[92px] flex items-center justify-center text-[#4aaef0]"><svg class="w-[24px] h-[24px] mt-[4px]"><use href="#p"/></svg></div></div>
      <div class="border-l border-[#e2e2e2] px-[9px] flex flex-col gap-[10px] -mt-[18.5px]"><div class="rounded-[20px] border border-[#e2e2e2] overflow-hidden"><div class="bg-[#7b9eab] h-[126px] pt-[10px]"><svg class="inline w-[25px] h-[25px] align-[-3px]"><use href="#s"/></svg> <b>Service</b> - Example<br>Time Based Service -<br>105 Minutes</div><div class="h-[53px] flex items-center justify-center font-bold">9:30 AM – 7:30 PM</div></div><div class="rounded-[20px] border border-[#e2e2e2] overflow-hidden"><div class="bg-[#8aaab6] h-[126px] pt-[10px]"><svg class="inline w-[25px] h-[25px] align-[-3px]"><use href="#s"/></svg> <b>Service</b> - Example<br>Time Based Service -<br>120 Minutes</div><div class="h-[53px] flex items-center justify-center font-bold">9:30 AM – 7:30 PM</div></div><div class="rounded-[20px] border border-[#e2e2e2] overflow-hidden"><div class="bg-[#b8ced4] h-[126px] pt-[10px]"><svg class="inline w-[25px] h-[25px] align-[-3px]"><use href="#s"/></svg> <b>Service</b> - Example<br>Service With<br>Commission (60 min)</div><div class="h-[53px] flex items-center justify-center font-bold">9:30 AM – 7:30 PM</div></div><div class="rounded-[20px] border border-[#e2e2e2] h-[92px] flex items-center justify-center text-[#4aaef0]"><svg class="w-[24px] h-[24px] mt-[4px]"><use href="#p"/></svg></div></div>
    </div>
    <div class="grid grid-cols-[210px_repeat(7,minmax(0,1fr))] border-b-2 border-[#e2e2e2] h-[267px] text-center">
      <div class="text-left pl-[9px] pt-[10px]"><b>Example<br>Specialist 3 <svg class="inline w-[24px] h-[24px] align-[-3px]"><use href="#i"/></svg></b><br><span class="text-[#999]">0 hrs</span></div>
      <div class="border-l border-[#e2e2e2] px-[9px] py-[10px] flex flex-col gap-[10px]"><div class="rounded-[20px] border border-[#e2e2e2] overflow-hidden"><div class="bg-[#a6bfc6] h-[90px] pt-[9px]"><svg class="inline w-[25px] h-[25px] align-[-3px]"><use href="#s"/></svg> <b>Service</b> - Example<br>Slot Based Service</div><div class="h-[53px] flex items-center justify-center font-bold">10 Slots</div></div><div class="rounded-[20px] border border-[#e2e2e2] h-[92px] flex items-center justify-center text-[#4aaef0]"><svg class="w-[24px] h-[24px] mt-[4px]"><use href="#p"/></svg></div></div>
      <div class="border-l border-[#e2e2e2] px-[9px] py-[10px]"><div class="rounded-[20px] border border-[#e2e2e2] h-[92px] flex items-center justify-center text-[#4aaef0]"><svg class="w-[24px] h-[24px] mt-[4px]"><use href="#p"/></svg></div></div>
      <div class="border-l border-[#e2e2e2] px-[9px] py-[10px]"><div class="rounded-[20px] border border-[#e2e2e2] h-[92px] flex items-center justify-center text-[#4aaef0]"><svg class="w-[24px] h-[24px] mt-[4px]"><use href="#p"/></svg></div></div>
      <div class="border-l border-[#e2e2e2] px-[9px] py-[10px]"><div class="rounded-[20px] border border-[#e2e2e2] h-[92px] flex items-center justify-center text-[#4aaef0]"><svg class="w-[24px] h-[24px] mt-[4px]"><use href="#p"/></svg></div></div>
      <div class="border-l border-[#e2e2e2] px-[9px] py-[10px]"><div class="rounded-[20px] border border-[#e2e2e2] h-[92px] flex items-center justify-center text-[#4aaef0]"><svg class="w-[24px] h-[24px] mt-[4px]"><use href="#p"/></svg></div></div>
      <div class="border-l border-[#e2e2e2] px-[9px] py-[10px]"><div class="rounded-[20px] border border-[#e2e2e2] h-[92px] flex items-center justify-center text-[#4aaef0]"><svg class="w-[24px] h-[24px] mt-[4px]"><use href="#p"/></svg></div></div>
      <div class="border-l border-[#e2e2e2] px-[9px] py-[10px]"><div class="rounded-[20px] border border-[#e2e2e2] h-[92px] flex items-center justify-center text-[#4aaef0]"><svg class="w-[24px] h-[24px] mt-[4px]"><use href="#p"/></svg></div></div>
    </div>
    <div class="grid grid-cols-[210px_repeat(7,minmax(0,1fr))] h-[110px]">
      <div class="pl-[9px] pr-[10px] pt-[9px]"><div class="rounded-[20px] border border-[#e2e2e2] h-[92px] flex items-center justify-center text-[#4aaef0]"><svg class="w-[24px] h-[24px] mt-[3px]" viewBox="0 0 24 24"><path d="M12 0v24M0 12h24" stroke="currentColor" stroke-width="5" fill="none"/></svg></div></div>
      <div class="border-l border-[#e2e2e2]"></div><div class="border-l border-[#e2e2e2]"></div><div class="border-l border-[#e2e2e2]"></div><div class="border-l border-[#e2e2e2]"></div><div class="border-l border-[#e2e2e2]"></div><div class="border-l border-[#e2e2e2]"></div><div class="border-l border-[#e2e2e2]"></div>
    </div>
  </div>
</main>
<div class="absolute right-[49px] top-[18px] w-[649px] h-[144px] rounded-[14px] bg-[#e3efdc] text-[#234610] shadow-[0_8px_30px_rgba(0,0,0,0.1)] flex pl-[23px] pt-[12px]">
  <svg class="w-[25px] h-[25px] mt-[11px] shrink-0" viewBox="0 0 512 512"><path fill="currentColor" d="M504 256c0 136.967-111.033 248-248 248S8 392.967 8 256 119.033 8 256 8s248 111.033 248 248zM227.314 387.314l184-184c6.248-6.248 6.248-16.379 0-22.627l-22.627-22.627c-6.248-6.249-16.379-6.249-22.628 0L216 308.118l-70.059-70.059c-6.248-6.248-16.379-6.248-22.628 0l-22.627 22.627c-6.248 6.248-6.248 16.379 0 22.627l104 104c6.249 6.25 16.379 6.25 22.628.001z"/></svg>
  <div class="ml-[20px]"><div class="font-bold text-[36px] leading-[48px]">Success!</div><div class="text-[27px] leading-[38px] mt-[6px]">Changes successfully saved.</div></div>
</div>
</div>
<svg class="absolute left-0 top-0 w-[2514px] h-[1462px] pointer-events-none" viewBox="0 0 2514 1462"><path d="M212 759 341 958" stroke="#ee4023" stroke-width="11" fill="none"/><path d="M359.500 949 365 1003 318 974Z" fill="#ee4023"/></svg>
</body></html>
